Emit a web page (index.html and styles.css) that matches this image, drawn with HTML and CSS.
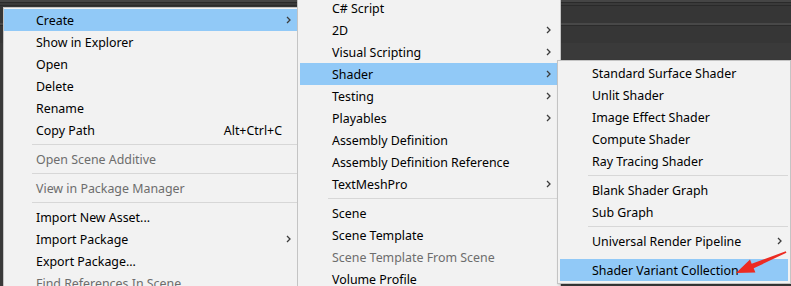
FILE: index.html
```html
<!DOCTYPE html>
<html>
<head>
    <meta charset="UTF-8">
    <title>Create Shader Menu</title>
    <link rel="stylesheet" href="styles.css">
</head>
<body>
    <div class="desk">
        <div class="menu menu-main">
            <div class="item on">Create <svg class="more" width="5" height="8" viewBox="0 0 5 8"><path d="M1 1l3 3-3 3" /></svg></div>
            <div class="item">Show in Explorer</div>
            <div class="item">Open</div>
            <div class="item">Delete</div>
            <div class="item">Rename</div>
            <div class="item">Copy Path <span class="key">Alt+Ctrl+C</span></div>
            <div class="sep"></div>
            <div class="item off">Open Scene Additive</div>
            <div class="sep"></div>
            <div class="item off">View in Package Manager</div>
            <div class="sep"></div>
            <div class="item">Import New Asset...</div>
            <div class="item">Import Package <svg class="more" width="5" height="8" viewBox="0 0 5 8"><path d="M1 1l3 3-3 3" /></svg></div>
            <div class="item">Export Package...</div>
            <div class="item off">Find References In Scene</div>
        </div>

        <div class="menu menu-create">
            <div class="item">C# Script</div>
            <div class="item">2D <svg class="more" width="5" height="8" viewBox="0 0 5 8"><path d="M1 1l3 3-3 3" /></svg></div>
            <div class="item">Visual Scripting <svg class="more" width="5" height="8" viewBox="0 0 5 8"><path d="M1 1l3 3-3 3" /></svg></div>
            <div class="item on">Shader <svg class="more" width="5" height="8" viewBox="0 0 5 8"><path d="M1 1l3 3-3 3" /></svg></div>
            <div class="item">Testing <svg class="more" width="5" height="8" viewBox="0 0 5 8"><path d="M1 1l3 3-3 3" /></svg></div>
            <div class="item">Playables <svg class="more" width="5" height="8" viewBox="0 0 5 8"><path d="M1 1l3 3-3 3" /></svg></div>
            <div class="item">Assembly Definition</div>
            <div class="item">Assembly Definition Reference</div>
            <div class="item">TextMeshPro <svg class="more" width="5" height="8" viewBox="0 0 5 8"><path d="M1 1l3 3-3 3" /></svg></div>
            <div class="sep"></div>
            <div class="item">Scene</div>
            <div class="item">Scene Template</div>
            <div class="item off">Scene Template From Scene</div>
            <div class="item">Volume Profile</div>
        </div>

        <div class="menu menu-shader">
            <div class="item">Standard Surface Shader</div>
            <div class="item">Unlit Shader</div>
            <div class="item">Image Effect Shader</div>
            <div class="item">Compute Shader</div>
            <div class="item">Ray Tracing Shader</div>
            <div class="sep"></div>
            <div class="item">Blank Shader Graph</div>
            <div class="item">Sub Graph</div>
            <div class="sep"></div>
            <div class="item">Universal Render Pipeline <svg class="more" width="5" height="8" viewBox="0 0 5 8"><path d="M1 1l3 3-3 3" /></svg></div>
            <div class="sep blank"></div>
            <div class="item on">Shader Variant Collection</div>
        </div>

        <!-- red pointer drawn over the menu -->
        <svg class="pointer" width="791" height="286" viewBox="0 0 791 286">
            <polygon points="736,273 750,259.5 751.7,263.7 785.8,251.3 786.4,252.7 753.7,268.3 755.4,272.5" />
        </svg>
    </div>
</body>
</html>
```

FILE: styles.css
```css
body {
    margin: 0;
    font-family: "Noto Sans", "Liberation Sans", sans-serif;
    font-size: 12.4px;
    background-color: #383838;
}

.desk {
    position: relative;
    width: 791px;
    height: 286px;
    overflow: hidden;
    background: linear-gradient(to bottom,
        #454545 0, #454545 2px,
        #2a2a2a 2px, #2a2a2a 3px,
        #3a3a3a 3px, #3a3a3a 5px,
        #2a2a2a 5px, #2a2a2a 6px,
        #363636 6px, #363636 23px,
        #484848 23px, #484848 25px,
        #2b2b2b 25px, #2b2b2b 26px,
        #363636 26px, #363636 43px,
        #3a3a3a 43px);
}

.menu {
    position: absolute;
    display: flex;
    flex-direction: column;
    background-color: #f2f2f2;
    border: 1px solid #c4c4c4;
}

.menu-main {
    left: 3px;
    top: 7px;
    width: 293px;
    height: 300px;
    padding: 1px 0;
}

.menu-create {
    left: 297px;
    top: -5px;
    width: 257px;
    height: 320px;
    padding: 1px 3px 1px 2px;
}

.menu-shader {
    left: 557px;
    top: 60px;
    width: 228px;
    padding: 1px 2px 2px 2px;
    box-shadow: 1px 1px 2px rgba(0, 0, 0, 0.2);
}

.item {
    display: flex;
    align-items: center;
    height: 22px;
    padding: 0 6px 0 32px;
    color: #000;
    white-space: nowrap;
}

.item.on {
    background-color: #91c9f7;
}

.item.off {
    color: #6d6d6d;
}

.key {
    margin-left: auto;
    margin-right: 9px;
}

.more {
    margin-left: auto;
}

.more path {
    fill: none;
    stroke: #3c3c3c;
    stroke-width: 1.3;
}

.sep {
    display: flex;
    align-items: center;
    height: 7px;
    padding-left: 28px;
}

.sep::after {
    content: "";
    flex: 1;
    height: 1px;
    background-color: #d7d7d7;
}

.sep.blank::after {
    background-color: transparent;
}

.pointer {
    position: absolute;
    left: 0;
    top: 0;
    pointer-events: none;
}

.pointer polygon {
    fill: #ec2b22;
}
```
